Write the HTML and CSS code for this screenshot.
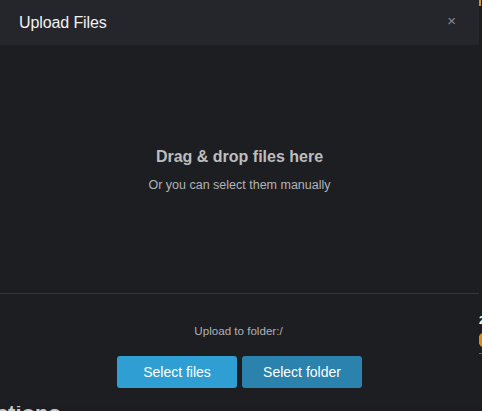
FILE: index.html
```html
<!DOCTYPE html>
<html>
<head>
<meta charset="utf-8">
<link rel="stylesheet" href="styles.css">
</head>
<body>
<div class="page">
  <div class="scroll-mark"></div>
  <div class="side-info">
    <span class="side-num">2</span>
    <span class="side-dot"></span>
    <span class="side-line"></span>
  </div>
  <h2 class="page-heading">Actions</h2>
</div>
<div class="modal">
  <div class="modal-header">
    <span class="modal-title">Upload Files</span>
    <span class="modal-close">×</span>
  </div>
  <div class="dropzone">
    <div class="drop-title">Drag &amp; drop files here</div>
    <div class="drop-sub">Or you can select them manually</div>
  </div>
  <div class="modal-footer">
    <div class="folder">Upload to folder:/</div>
    <div class="buttons">
      <button class="btn btn-files">Select files</button>
      <button class="btn btn-folder">Select folder</button>
    </div>
  </div>
</div>
</body>
</html>
```
FILE: styles.css
```css
html, body {
  margin: 0;
  padding: 0;
  width: 482px;
  height: 411px;
  overflow: hidden;
  background: #1c1d21;
  font-family: "Liberation Sans", Arial, sans-serif;
}
.page {
  position: relative;
  width: 482px;
  height: 411px;
}
.scroll-mark {
  position: absolute;
  left: 479px;
  top: 0;
  width: 2px;
  height: 6px;
  background: #d98a2b;
}
.side-info {
  position: absolute;
  left: 478px;
  top: 314px;
  display: flex;
  flex-direction: column;
}
.side-num {
  color: #ffffff;
  font-size: 11px;
  font-weight: bold;
  line-height: 12px;
  margin-left: 1px;
}
.side-dot {
  width: 16px;
  height: 16px;
  border-radius: 50%;
  background: #e08a14;
  margin-top: 6px;
}
.side-line {
  width: 6px;
  height: 1px;
  background: #6a6b70;
  margin-top: 5px;
}
.page-heading {
  position: absolute;
  left: -20px;
  top: 401px;
  margin: 0;
  font-size: 22px;
  font-weight: bold;
  color: #c8c9cc;
}
.modal {
  position: absolute;
  left: 0;
  top: 0;
  width: 479px;
  height: 406px;
  background: #1d1e22;
  display: flex;
  flex-direction: column;
}
.modal-header {
  height: 45px;
  background: #25262b;
  display: flex;
  align-items: center;
  justify-content: space-between;
  padding: 0 23px 0 19px;
  flex-shrink: 0;
}
.modal-title {
  color: #f2f2f2;
  font-size: 16px;
  letter-spacing: -0.1px;
}
.modal-close {
  color: #8a8b90;
  font-size: 15px;
  line-height: 1;
  margin-top: -5px;
}
.dropzone {
  height: 249px;
  border-bottom: 1px solid #36373b;
  display: flex;
  flex-direction: column;
  align-items: center;
  justify-content: center;
  padding-top: 3px;
  box-sizing: border-box;
}
.drop-title {
  color: #bdbdbf;
  font-size: 16px;
  font-weight: bold;
  line-height: 18px;
}
.drop-sub {
  color: #b2b3b6;
  font-size: 12.5px;
  line-height: 15px;
  margin-top: 12px;
}
.modal-footer {
  display: flex;
  flex-direction: column;
  align-items: center;
  padding-top: 30px;
}
.folder {
  color: #b0b1b4;
  font-size: 11.6px;
  margin-left: -2px;
}
.buttons {
  display: flex;
  gap: 5px;
  margin-top: 19px;
}
.btn {
  width: 120px;
  height: 32px;
  border: none;
  border-radius: 3px;
  color: #ffffff;
  font-size: 14px;
  font-family: "Liberation Sans", Arial, sans-serif;
  padding: 0;
}
.btn-files {
  background: #2f9fd3;
}
.btn-folder {
  background: #2a82ad;
}
```
